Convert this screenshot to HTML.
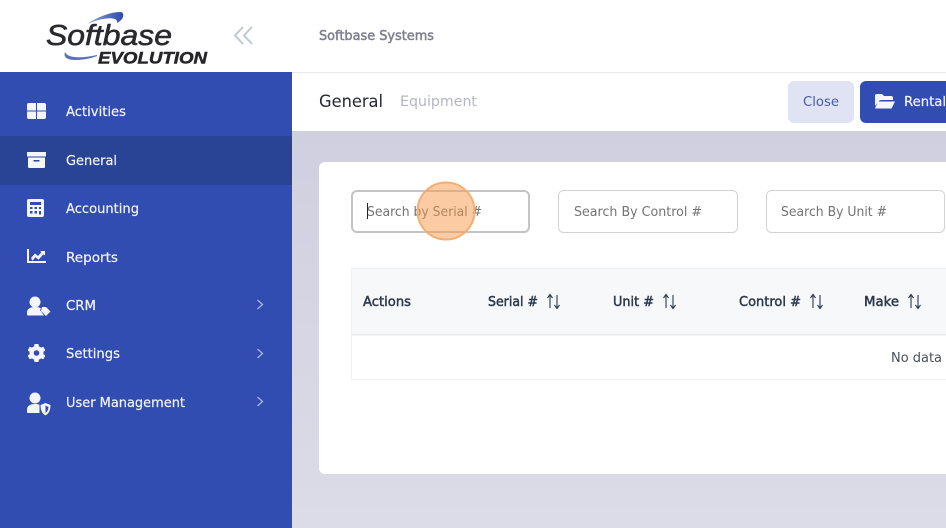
<!DOCTYPE html>
<html><head><meta charset="utf-8"><style>
html,body{margin:0;padding:0;width:946px;height:528px;overflow:hidden;background:#d8d8e5}
svg{display:block}
text{font-family:"DejaVu Sans",sans-serif}
.m{font-size:13.5px;fill:#f2f4fb;stroke:#f2f4fb;stroke-width:.2}
.l{font-family:"Liberation Sans",sans-serif}
</style></head><body>
<svg width="946" height="528" viewBox="0 0 946 528" xmlns="http://www.w3.org/2000/svg">
<defs>
<linearGradient id="bg" x1="0" y1="0" x2="0" y2="1"><stop offset="0" stop-color="#cfcfdf"/><stop offset="1" stop-color="#dcdce8"/></linearGradient>
<linearGradient id="sw" x1="0" y1="0" x2="1" y2="0"><stop offset="0" stop-color="#8fa3d8"/><stop offset="1" stop-color="#2f4aa8"/></linearGradient>
</defs>
<rect x="292" y="131" width="654" height="397" fill="url(#bg)"/>
<rect x="292" y="0" width="654" height="131" fill="#fff"/>
<rect x="292" y="72" width="654" height="1" fill="#e9e9ef"/>
<rect x="0" y="0" width="292" height="72" fill="#fff"/>
<rect x="0" y="72" width="292" height="456" fill="#314db1"/>
<rect x="0" y="136" width="292" height="49" fill="#2a4495"/>

<!-- logo -->
<path d="M87 24C98 17 110 12 120 12C124 12 124 16 122 19C120 21 119 22 117 23C119 17 106 16 87 24Z" fill="url(#sw)"/>
<path d="M65 52C63 58 68 60 76 60C84 60 92 58 97 56L97 55C84 58 68 59 65 52Z" fill="#5a70b8"/>
<text class="l" x="46" y="45" font-size="29" font-style="italic" fill="#2a2a2e" stroke="#2a2a2e" stroke-width=".6" textLength="126" lengthAdjust="spacingAndGlyphs">Softbase</text>
<text class="l" x="98" y="63.500" font-size="17" font-style="italic" font-weight="bold" fill="#26262a" stroke="#26262a" stroke-width=".5" textLength="109" lengthAdjust="spacingAndGlyphs">EVOLUTION</text>
<path d="M243 27L235 35.500L243 44M252 27L244 35.500L252 44" fill="none" stroke="#c3c7d4" stroke-width="2"/>

<!-- sidebar icons -->
<g fill="#f4f6fc">
<path d="M27 105a2 2 0 0 1 2-2h7v7.500h-9zM37 103h7a2 2 0 0 1 2 2v5.500h-9zM27 111.500h9v7.500h-7a2 2 0 0 1-2-2zM37 111.500h9v5.500a2 2 0 0 1-2 2h-7z"/>
<path d="M27 152h19v4.500H27z"/>
<path fill-rule="evenodd" d="M28 157.500h17v9.500a1 1 0 0 1-1 1H29a1 1 0 0 1-1-1zM33.500 160v1.500h6V160z"/>
<path fill-rule="evenodd" d="M29 199h13a2 2 0 0 1 2 2v14a2 2 0 0 1-2 2H29a2 2 0 0 1-2-2v-14a2 2 0 0 1 2-2zM30 202v3h11v-3zM30 207v2h2.500v-2zM34.500 207v2h2.500v-2zM39 207v2h2v-2zM30 211v2.500h2.500V211zM34.500 211v2.500h2.500V211zM39 211v3.500h2V211z"/>
<path d="M27 249h2v12h17v2H27z"/>
<path d="M31 258l4-4.500 3 2.500 3.500-3.800-1.500-1.200h5v4.500l-1.500-1.200-5 5.500-3-2.500-3 3.300z"/>
<circle cx="35" cy="302" r="5.500"/>
<path d="M27 315v-2.500c0-3.500 3-5.500 8-5.500 3 0 5 .5 6 1.500l-1 1.500 4 5.500H28a1 1 0 0 1-1-1z"/>
<path d="M42 307h4l4.500 4.500-4.500 4.500-5-5z"/>
<g transform="translate(36.500 353)">
<rect x="-2.300" y="-9" width="4.600" height="18" rx="1"/>
<rect x="-2.300" y="-9" width="4.600" height="18" rx="1" transform="rotate(60)"/>
<rect x="-2.300" y="-9" width="4.600" height="18" rx="1" transform="rotate(120)"/>
<circle r="7"/>
<circle r="2.800" fill="#314db1"/>
</g>
<circle cx="35" cy="398" r="5.500"/>
<path d="M27 412v-2.500c0-3.500 3-5.500 8-5.500 1.700 0 3.200 .2 4.500 .7v8.300H28a1 1 0 0 1-1-1z"/>
<path fill-rule="evenodd" d="M45.500 403l5 2c0 5-1.500 8.500-5 10.500-3.500-2-5-5.500-5-10.500zM45.500 405.500v7.500c1.600-1.200 2.800-3 3-6z"/>
</g>
<text class="m" x="66" y="116" textLength="60" lengthAdjust="spacingAndGlyphs">Activities</text>
<text class="m" x="66" y="165" textLength="51" lengthAdjust="spacingAndGlyphs">General</text>
<text class="m" x="66" y="213" textLength="73" lengthAdjust="spacingAndGlyphs">Accounting</text>
<text class="m" x="66" y="262" textLength="52" lengthAdjust="spacingAndGlyphs">Reports</text>
<text class="m" x="66" y="310" textLength="30" lengthAdjust="spacingAndGlyphs">CRM</text>
<text class="m" x="66" y="358" textLength="54" lengthAdjust="spacingAndGlyphs">Settings</text>
<text class="m" x="66" y="407" textLength="119" lengthAdjust="spacingAndGlyphs">User Management</text>
<g fill="none" stroke="#a9b6e2" stroke-width="1.300">
<path d="M257.500 300l5 4.500-5 4.500M257.500 349l5 4.500-5 4.500M257.500 397l5 4.500-5 4.500"/>
</g>

<!-- header -->
<text x="319" y="40" font-size="13.500" fill="#7d7f90" stroke="#7d7f90" stroke-width=".5" textLength="115" lengthAdjust="spacingAndGlyphs">Softbase Systems</text>
<text x="319" y="107" font-size="16.500" fill="#26282e" textLength="64" lengthAdjust="spacingAndGlyphs">General</text>
<text x="400" y="106" font-size="14.500" fill="#b5b6c2" textLength="77" lengthAdjust="spacingAndGlyphs">Equipment</text>
<rect x="788" y="81" width="66" height="42" rx="6" fill="#dfe3f3"/>
<text x="803" y="106" font-size="13.500" fill="#4a5c9f" textLength="36" lengthAdjust="spacingAndGlyphs">Close</text>
<path d="M860 87a6 6 0 0 1 6-6h80v42h-80a6 6 0 0 1-6-6z" fill="#314db1"/>
<path d="M875 106v-10a2 2 0 0 1 2-2h5l2 2h7a2 2 0 0 1 2 2v2h-12a3 3 0 0 0-2.500 1.500zM878 101.500h17l-3.500 7H875z" fill="#f4f6fc"/>
<text x="904" y="106" font-size="13.500" fill="#f4f6fc" stroke="#f4f6fc" stroke-width=".2" textLength="42" lengthAdjust="spacingAndGlyphs">Rental</text>

<!-- card -->
<rect x="319" y="162" width="640" height="312" rx="6" fill="#fff"/>
<rect x="352" y="191" width="177" height="41" rx="5" fill="#fff" stroke="#c4c4c6" stroke-width="2"/>
<rect x="558.500" y="190.500" width="179" height="42" rx="5" fill="#fff" stroke="#d2d3d8"/>
<rect x="766.500" y="190.500" width="178" height="42" rx="5" fill="#fff" stroke="#d2d3d8"/>
<text x="367" y="216" font-size="13.500" fill="#737373" textLength="115" lengthAdjust="spacingAndGlyphs">Search by Serial #</text>
<rect x="367" y="203" width="1" height="16" fill="#222"/>
<text x="574" y="216" font-size="13.500" fill="#737373" textLength="128" lengthAdjust="spacingAndGlyphs">Search By Control #</text>
<text x="781" y="216" font-size="13.500" fill="#737373" textLength="106" lengthAdjust="spacingAndGlyphs">Search By Unit #</text>

<!-- table -->
<rect x="351.500" y="268.500" width="610" height="111" fill="#fff" stroke="#eef0f3"/>
<rect x="352" y="269" width="610" height="65" fill="#f7f8fa"/>
<rect x="352" y="334" width="610" height="1.500" fill="#e8eaee"/>
<g font-size="13.500" fill="#2e3a4c" stroke="#2e3a4c" stroke-width=".5">
<text x="363" y="306" textLength="48" lengthAdjust="spacingAndGlyphs">Actions</text>
<text x="488" y="306" textLength="50" lengthAdjust="spacingAndGlyphs">Serial #</text>
<text x="613" y="306" textLength="41" lengthAdjust="spacingAndGlyphs">Unit #</text>
<text x="739" y="306" textLength="62" lengthAdjust="spacingAndGlyphs">Control #</text>
<text x="864" y="306" textLength="35" lengthAdjust="spacingAndGlyphs">Make</text>
</g>
<g fill="none" stroke="#2e3a4c" stroke-width="1.100">
<path d="M550 308V295M547.500 298l2.500-3.500 2.500 3.500M557 295v13M554.500 305l2.500 3.500 2.500-3.500"/>
<path d="M666 308V295M663.500 298l2.500-3.500 2.500 3.500M673 295v13M670.500 305l2.500 3.500 2.500-3.500"/>
<path d="M813 308V295M810.500 298l2.500-3.500 2.500 3.500M820 295v13M817.500 305l2.500 3.500 2.500-3.500"/>
<path d="M911 308V295M908.500 298l2.500-3.500 2.500 3.500M918 295v13M915.500 305l2.500 3.500 2.500-3.500"/>
</g>
<text x="891" y="362" font-size="13.500" fill="#4a4f57" textLength="51" lengthAdjust="spacingAndGlyphs">No data</text>

<!-- click highlight -->
<circle cx="446" cy="211" r="28.500" fill="#f79a4a" fill-opacity=".5" stroke="#f5ae72" stroke-width="2"/>
</svg>
</body></html>
